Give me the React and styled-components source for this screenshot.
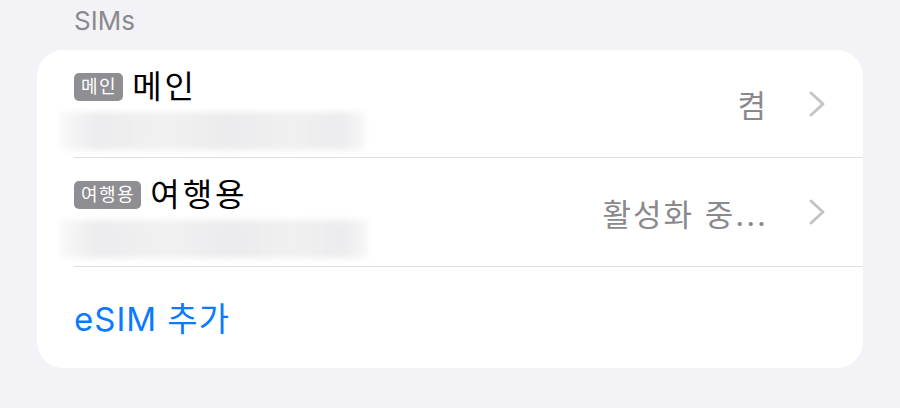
import styled, { createGlobalStyle } from "styled-components";

const GlobalStyle = createGlobalStyle`
  html, body {
    margin: 0;
    background: #f2f2f7;
    font-family: "Inter", "Noto Sans CJK KR", sans-serif;
    -webkit-font-smoothing: antialiased;
  }
`;

const Page = styled.div`
  width: 900px;
  height: 408px;
  box-sizing: border-box;
  padding: 0 37px;
  overflow: hidden;
`;

const SectionHeader = styled.div`
  height: 54px;
  padding-left: 37px;
  margin-top: -4px;
  font-size: 26px;
  line-height: 50px;
  color: #8a8a8e;
`;

const Card = styled.div`
  background: #ffffff;
  border-radius: 26px;
  overflow: hidden;
`;

const Row = styled.div`
  display: flex;
  align-items: center;
  margin-left: 37px;
  padding-right: 37px;
  height: ${(p) => p.$height}px;
  box-sizing: border-box;
  border-bottom: ${(p) => (p.$last ? "none" : "1.5px solid #dedee0")};
`;

const Info = styled.div`
  flex: 1;
  display: flex;
  flex-direction: column;
  align-self: stretch;
  padding-top: 22px;
`;

const TitleLine = styled.div`
  display: flex;
  align-items: center;
  gap: 9px;
  height: 30px;
`;

const Badge = styled.span`
  display: inline-flex;
  align-items: center;
  height: 28px;
  padding: 0 6px 0 7px;
  border-radius: 5px;
  background: #8e8e93;
  color: #ffffff;
  font-size: 18px;
  letter-spacing: 1.5px;
  line-height: 1;
`;

const Title = styled.span`
  font-size: 32px;
  letter-spacing: 3px;
  color: #000000;
  line-height: 1;
`;

const Blur = styled.div`
  margin-top: 10px;
  margin-left: -14px;
  width: ${(p) => p.$width}px;
  height: 38px;
  background: linear-gradient(
    90deg,
    rgba(236, 236, 238, 0.3) 0%,
    #ececee 12%,
    #f1f1f2 35%,
    #ebebed 55%,
    #f0f0f1 75%,
    #ececee 92%,
    rgba(236, 236, 238, 0.4) 100%
  );
  filter: blur(3px);
`;

const Value = styled.span`
  font-size: 31px;
  letter-spacing: 2px;
  color: #8a8a8e;
  margin-right: 40px;
`;

const Chevron = () => (
  <svg width="18" height="28" viewBox="0 0 18 28">
    <polyline
      points="3,3 15,14 3,25"
      fill="none"
      stroke="#c4c4c7"
      strokeWidth="3"
      strokeLinecap="round"
      strokeLinejoin="round"
    />
  </svg>
);

const Action = styled.span`
  font-size: 33px;
  letter-spacing: 1px;
  color: #0a7aff;
  margin-top: -2px;
`;

const sims = [
  { badge: "메인", name: "메인", value: "켬", height: 108, blur: 305 },
  { badge: "여행용", name: "여행용", value: "활성화 중...", height: 109, blur: 308 },
];

export default function App() {
  return (
    <Page>
      <GlobalStyle />
      <SectionHeader>SIMs</SectionHeader>
      <Card>
        {sims.map((s) => (
          <Row key={s.name} $height={s.height}>
            <Info>
              <TitleLine>
                <Badge>{s.badge}</Badge>
                <Title>{s.name}</Title>
              </TitleLine>
              <Blur $width={s.blur} />
            </Info>
            <Value>{s.value}</Value>
            <Chevron />
          </Row>
        ))}
        <Row $height={101} $last>
          <Action>eSIM 추가</Action>
        </Row>
      </Card>
    </Page>
  );
}
